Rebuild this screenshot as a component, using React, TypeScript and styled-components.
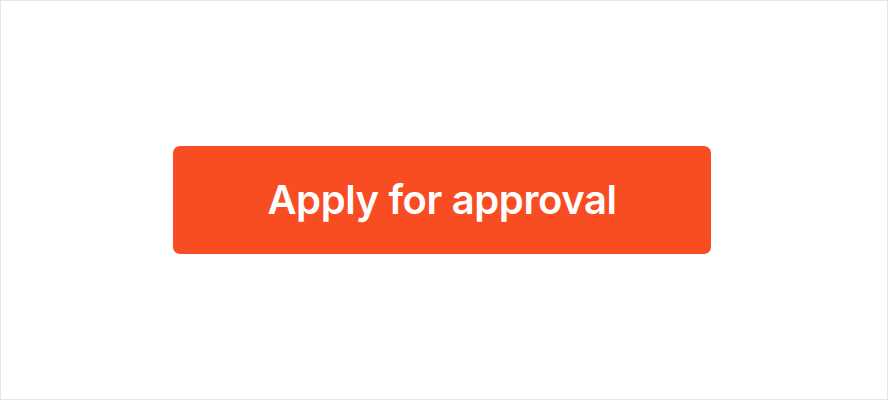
import React from "react";
import styled, { createGlobalStyle } from "styled-components";

const Global = createGlobalStyle`
  html, body { margin: 0; padding: 0; background: #ffffff; }
  #root { width: 888px; height: 400px; }
`;

const Frame = styled.div`
  box-sizing: border-box;
  width: 888px;
  height: 400px;
  border: 1px solid #e6e6e6;
  background: #ffffff;
  display: flex;
  align-items: center;
  justify-content: center;
  padding: 0 4px 0 0;
`;

const Button = styled.button`
  box-sizing: border-box;
  width: 538px;
  height: 108px;
  border: none;
  border-radius: 7px;
  background: #f84c23;
  color: #ffffff;
  font-family: Inter, "Noto Sans", sans-serif;
  font-weight: 600;
  font-size: 40px;
  letter-spacing: -0.4px;
  cursor: pointer;
  display: flex;
  align-items: center;
  justify-content: center;
  padding: 0 0 2px;
`;

export default function App() {
  return (
    <>
      <Global />
      <Frame>
        <Button>Apply for approval</Button>
      </Frame>
    </>
  );
}
